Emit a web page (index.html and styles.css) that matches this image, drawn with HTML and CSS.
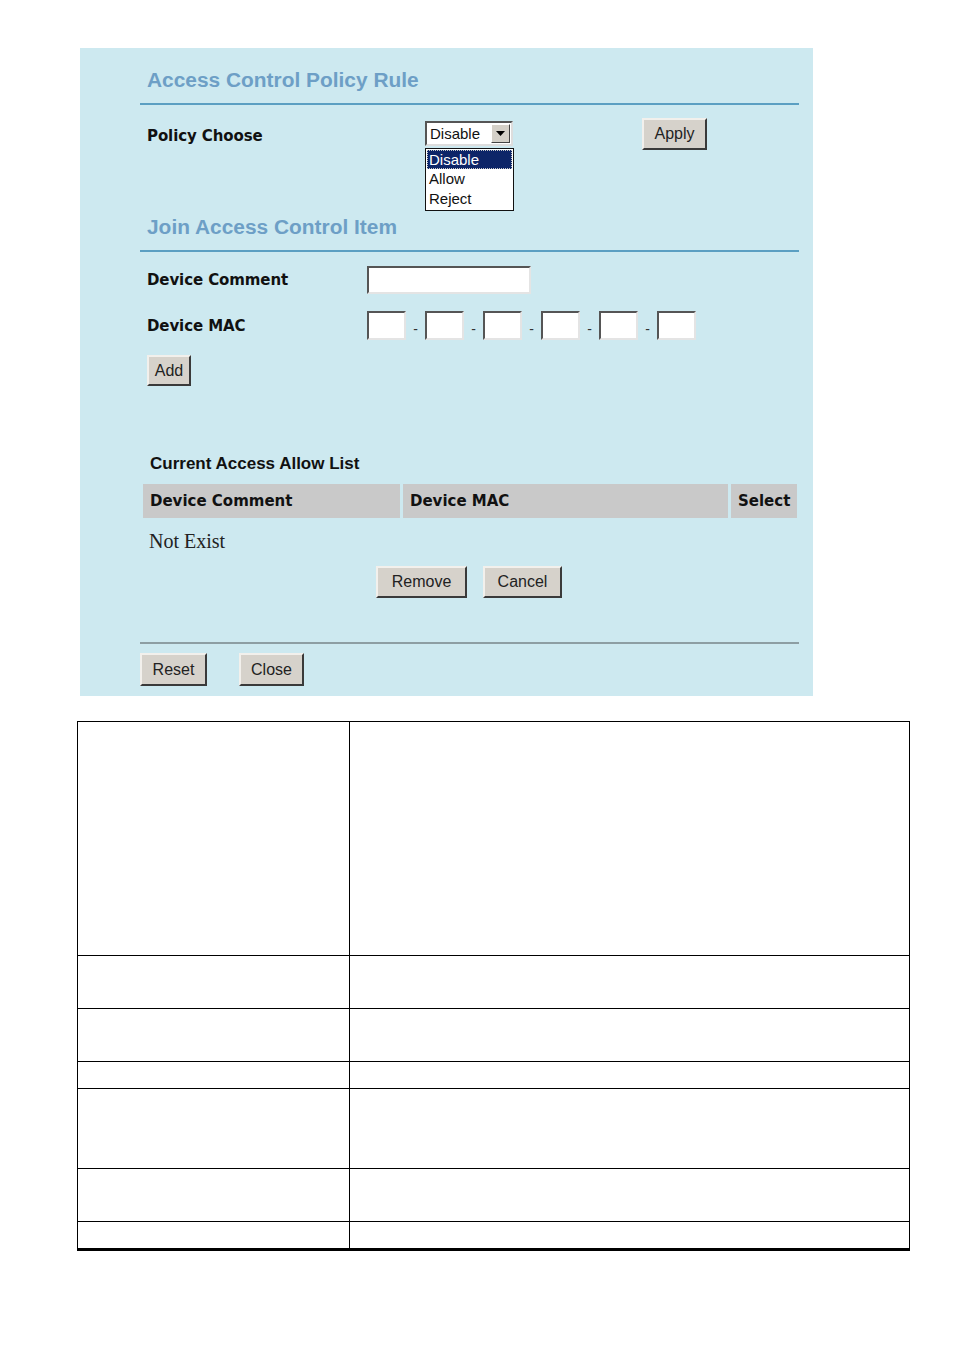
FILE: index.html
```html
<!DOCTYPE html>
<html>
<head>
<meta charset="utf-8">
<link rel="stylesheet" href="styles.css">
</head>
<body>
<div class="panel">
  <h2 class="sect-title t1">Access Control Policy Rule</h2>
  <div class="rule blue"></div>
  <div class="policy-row">
    <span class="label">Policy Choose</span>
    <div class="select-wrap">
      <div class="select"><span class="sel-text">Disable</span><span class="sel-btn"><svg width="9" height="5" viewBox="0 0 9 5"><path d="M0 0H9L4.5 5Z" fill="#000"/></svg></span></div>
      <ul class="dropdown">
        <li class="hl">Disable</li>
        <li>Allow</li>
        <li>Reject</li>
      </ul>
    </div>
    <button class="btn apply">Apply</button>
  </div>
  <h2 class="sect-title t2">Join Access Control Item</h2>
  <div class="rule blue"></div>
  <div class="form-row r1">
    <span class="label">Device Comment</span>
    <span class="field wide"></span>
  </div>
  <div class="form-row r2">
    <span class="label">Device MAC</span>
    <div class="mac">
      <span class="field sm"></span><span class="dash">-</span>
      <span class="field sm"></span><span class="dash">-</span>
      <span class="field sm"></span><span class="dash">-</span>
      <span class="field sm"></span><span class="dash">-</span>
      <span class="field sm"></span><span class="dash">-</span>
      <span class="field sm"></span>
    </div>
  </div>
  <button class="btn add">Add</button>
  <div class="list-title">Current Access Allow List</div>
  <div class="list-head">
    <div class="hc c1">Device Comment</div>
    <div class="hc c2">Device MAC</div>
    <div class="hc c3">Select</div>
  </div>
  <div class="empty">Not Exist</div>
  <div class="center-btns">
    <button class="btn remove">Remove</button>
    <button class="btn cancel">Cancel</button>
  </div>
  <div class="rule gray"></div>
  <div class="bottom-btns">
    <button class="btn reset">Reset</button>
    <button class="btn close">Close</button>
  </div>
</div>
<table class="desc">
  <tr class="h1"><td class="k"></td><td></td></tr>
  <tr class="h2"><td class="k"></td><td></td></tr>
  <tr class="h2"><td class="k"></td><td></td></tr>
  <tr class="h3"><td class="k"></td><td></td></tr>
  <tr class="h4"><td class="k"></td><td></td></tr>
  <tr class="h2"><td class="k"></td><td></td></tr>
  <tr class="h5"><td class="k"></td><td></td></tr>
</table>
</body>
</html>
```
FILE: styles.css
```css
* { box-sizing: border-box; }
body { margin: 0; background: #fff; font-family: "Liberation Sans", Arial, sans-serif; }
.panel {
  margin: 48px 0 0 80px;
  width: 733px;
  height: 648px;
  background: #cde9f0;
  padding: 0 14px 0 60px;
  overflow: visible;
}
.sect-title {
  margin: 0;
  padding-left: 7px;
  font-size: 20.9px;
  font-weight: bold;
  color: #6d9fc6;
  line-height: 24px;
}
.t1 { padding-top: 20px; height: 55px; }
.t2 { padding-top: 15px; height: 50px; }
.rule { height: 2px; }
.rule.blue { background: #5b9fc2; }
.rule.gray { background: #8d9ea3; margin-top: 44px; }
.label {
  font-family: "DejaVu Sans", Verdana, sans-serif;
  font-weight: bold;
  font-size: 15px;
  color: #111;
  letter-spacing: -0.1px;
}
.policy-row {
  display: flex;
  align-items: flex-start;
  padding-left: 7px;
  height: 95px;
}
.policy-row .label { margin-top: 22px; width: 278px; }
.select-wrap { position: relative; margin-top: 16px; width: 217px; }
.select {
  width: 88px; height: 25px;
  background: #fff;
  border: 2px solid;
  border-color: #555 #ddd #ddd #555;
  display: flex; align-items: center; justify-content: space-between;
  padding: 0 1px 0 3px;
}
.sel-text { font-size: 15px; color: #111; }
.sel-btn {
  width: 19px; height: 19px;
  background: #d4d0c8;
  border: 1px solid; border-color: #fff #444 #444 #fff;
  display: flex; align-items: center; justify-content: center;
}
.dropdown {
  position: absolute; left: 0; top: 27px;
  width: 89px;
  margin: 0; padding: 1px;
  list-style: none;
  background: #fff;
  border: 1px solid #111;
  font-size: 15px;
  line-height: 20px;
  color: #111;
}
.dropdown li { padding-left: 2px; height: 20px; }
.dropdown li.hl { background: #0d2568; color: #fff; outline: 1px dotted #c9c9c9; outline-offset: -1px; height: 19px; line-height: 19px; }
.btn {
  font-family: "Liberation Sans", Arial, sans-serif;
  font-size: 16px;
  color: #222;
  background: #d6d2cb;
  border: 2px solid;
  border-color: #f2f0ec #3a3a3a #3a3a3a #f2f0ec;
  padding: 0;
  height: 32px;
}
.apply { margin-top: 13px; width: 65px; }
.form-row { display: flex; align-items: center; padding-left: 7px; }
.form-row .label { width: 220px; }
.r1 { margin-top: 14px; height: 28px; }
.r2 { margin-top: 17px; height: 29px; }
.field {
  display: inline-block;
  background: #fff;
  border: 2px solid;
  border-color: #555 #e4e4e4 #e4e4e4 #555;
}
.field.wide { width: 164px; height: 28px; }
.mac { display: flex; align-items: center; }
.field.sm { width: 39px; height: 29px; }
.dash { width: 19px; text-align: center; font-size: 14px; color: #333; padding-top: 6px; }
.add { margin: 15px 0 0 7px; width: 44px; height: 31px; }
.list-title {
  margin-top: 68px;
  padding-left: 10px;
  font-weight: bold; font-size: 17px; color: #111;
  line-height: 20px;
}
.list-head {
  margin: 10px 2px 0 3px;
  display: flex; gap: 3px;
  height: 34px;
}
.hc {
  background: #c9c9c9;
  font-family: "DejaVu Sans", Verdana, sans-serif;
  font-weight: bold; font-size: 15px; color: #111;
  display: flex; align-items: center;
  padding-left: 7px;
}
.c1 { width: 257px; }
.c2 { width: 325px; }
.c3 { flex: 1; }
.empty {
  font-family: "Liberation Serif", "Times New Roman", serif;
  font-size: 20px; color: #222;
  padding-left: 9px;
  margin-top: 12px;
  line-height: 22px;
}
.center-btns { display: flex; gap: 16px; padding-left: 236px; margin-top: 14px; }
.remove { width: 91px; }
.cancel { width: 79px; }
.bottom-btns { display: flex; gap: 32px; margin-top: 9px; }
.reset { width: 67px; height: 33px; }
.close { width: 65px; height: 33px; }
.desc {
  margin: 25px 0 0 77px;
  width: 833px;
  border-collapse: collapse;
  border-bottom: 3px solid #000;
}
.desc td { border: 1.5px solid #000; padding: 0; }
.desc td.k { width: 272px; }
.h1 { height: 234px; }
.h2 { height: 53px; }
.h3 { height: 27px; }
.h4 { height: 80px; }
.h5 { height: 28px; }
```
